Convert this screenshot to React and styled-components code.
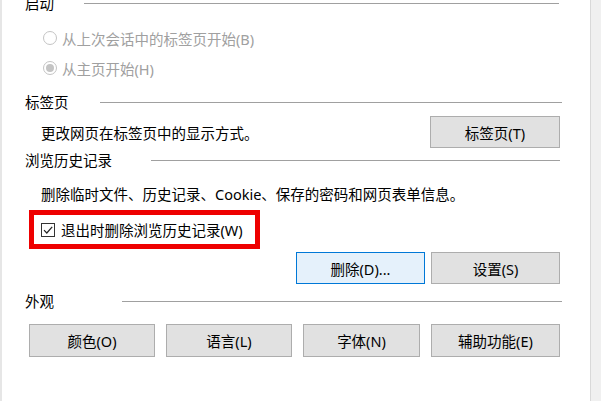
import React from "react";
import styled, { createGlobalStyle } from "styled-components";

const Global = createGlobalStyle`
  html, body { margin: 0; padding: 0; background: #fff; }
  body { font-family: "Noto Sans", "Noto Sans CJK SC", sans-serif; font-size: 14.5px; color: #000; }
  * { box-sizing: border-box; }
`;

const Window = styled.div`
  display: flex;
  width: 601px;
  height: 401px;
  overflow: hidden;
`;

const Panel = styled.div`
  flex: 1;
  min-width: 0;
  background: #fff;
  border-left: 2px solid #e6e6e6;
  display: flex;
  flex-direction: column;
  padding: 0 30px 0 23px;
`;

const SideStrip = styled.div`
  flex-shrink: 0;
  width: 11px;
  background: #f0f0f0;
  border-left: 1px solid #d9d9d9;
`;

const GroupHeader = styled.div`
  display: grid;
  grid-template-columns: ${(p) => p.$lineAt}px 1fr;
  align-items: center;
  height: 20px;
  margin-top: ${(p) => p.$top}px;
  margin-right: ${(p) => p.$endInset || 0}px;
  white-space: nowrap;
  line-height: 20px;
`;

const HeaderLine = styled.div`
  height: 1px;
  background: #a0a0a0;
`;

const RadioRow = styled.label`
  display: flex;
  align-items: center;
  height: 30px;
  padding-left: 18px;
  color: #a0a0a0;
  gap: 5px;
`;

const RadioCircle = styled.span`
  width: 14px;
  height: 14px;
  border-radius: 50%;
  border: 1px solid #c4c4c4;
  display: flex;
  align-items: center;
  justify-content: center;
  &::after {
    content: "";
    width: 8px;
    height: 8px;
    border-radius: 50%;
    background: ${(p) => (p.$checked ? "#c4c4c4" : "transparent")};
  }
`;

const Row = styled.div`
  display: flex;
  flex-shrink: 0;
  align-items: center;
  margin-top: ${(p) => p.$top}px;
  margin-right: ${(p) => p.$endInset || 0}px;
  padding-left: ${(p) => p.$indent || 0}px;
  gap: ${(p) => p.$gap || 0}px;
  justify-content: ${(p) => p.$justify || "flex-start"};
  height: ${(p) => p.$h}px;
`;

const Desc = styled.span`
  flex: 1;
  white-space: nowrap;
`;

const Button = styled.button`
  flex-shrink: 0;
  width: ${(p) => p.$w}px;
  height: ${(p) => p.$h || 32}px;
  font: inherit;
  color: #000;
  background: ${(p) => (p.$focus ? "#e5f1fb" : "#e1e1e1")};
  border: 1px solid ${(p) => (p.$focus ? "#0078d7" : "#adadad")};
  padding: 0;
  display: flex;
  align-items: center;
  justify-content: center;
`;

const Highlight = styled.div`
  flex-shrink: 0;
  margin-top: 7px;
  margin-left: 4px;
  width: 231px;
  height: 39px;
  border: 5px solid #ee0000;
  display: flex;
  align-items: center;
  padding-left: 7px;
  gap: 6px;
  white-space: nowrap;
`;

const CheckBox = styled.span`
  width: 14px;
  height: 14px;
  border: 1px solid #333;
  background: #fff;
  display: flex;
  align-items: center;
  justify-content: center;
`;

export default function App() {
  return (
    <>
      <Global />
      <Window>
        <Panel>
          <GroupHeader $lineAt={59} $top={-7} $endInset={1}>
            <span>启动</span>
            <HeaderLine />
          </GroupHeader>
          <div style={{ marginTop: 10 }}>
            <RadioRow>
              <RadioCircle />
              从上次会话中的标签页开始(B)
            </RadioRow>
            <RadioRow>
              <RadioCircle $checked />
              从主页开始(H)
            </RadioRow>
          </div>

          <GroupHeader $lineAt={75} $top={9} $endInset={-2}>
            <span>标签页</span>
            <HeaderLine />
          </GroupHeader>
          <Row $top={4} $indent={16} $h={32}>
            <Desc>更改网页在标签页中的显示方式。</Desc>
            <Button $w={130}>标签页(T)</Button>
          </Row>

          <GroupHeader $lineAt={126} $top={2}>
            <span>浏览历史记录</span>
            <HeaderLine />
          </GroupHeader>
          <Row $top={13} $indent={16} $h={20}>
            <Desc>删除临时文件、历史记录、Cookie、保存的密码和网页表单信息。</Desc>
          </Row>
          <Highlight>
            <CheckBox>
              <svg width="12" height="12" viewBox="0 0 12 12">
                <path d="M2 6.2 L4.8 9 L10.2 2.8" fill="none" stroke="#222" strokeWidth="1.2" />
              </svg>
            </CheckBox>
            退出时删除浏览历史记录(W)
          </Highlight>
          <Row $top={3} $h={32} $justify="flex-end" $gap={6}>
            <Button $w={129} $focus>删除(D)...</Button>
            <Button $w={129}>设置(S)</Button>
          </Row>

          <GroupHeader $lineAt={97} $top={7} $endInset={-2}>
            <span>外观</span>
            <HeaderLine />
          </GroupHeader>
          <Row $top={13} $indent={4} $h={33} $gap={11}>
            <Button $w={126} $h={33}>颜色(O)</Button>
            <Button $w={126} $h={33}>语言(L)</Button>
            <Button $w={117} $h={33}>字体(N)</Button>
            <Button $w={129} $h={33}>辅助功能(E)</Button>
          </Row>
        </Panel>
        <SideStrip />
      </Window>
    </>
  );
}
